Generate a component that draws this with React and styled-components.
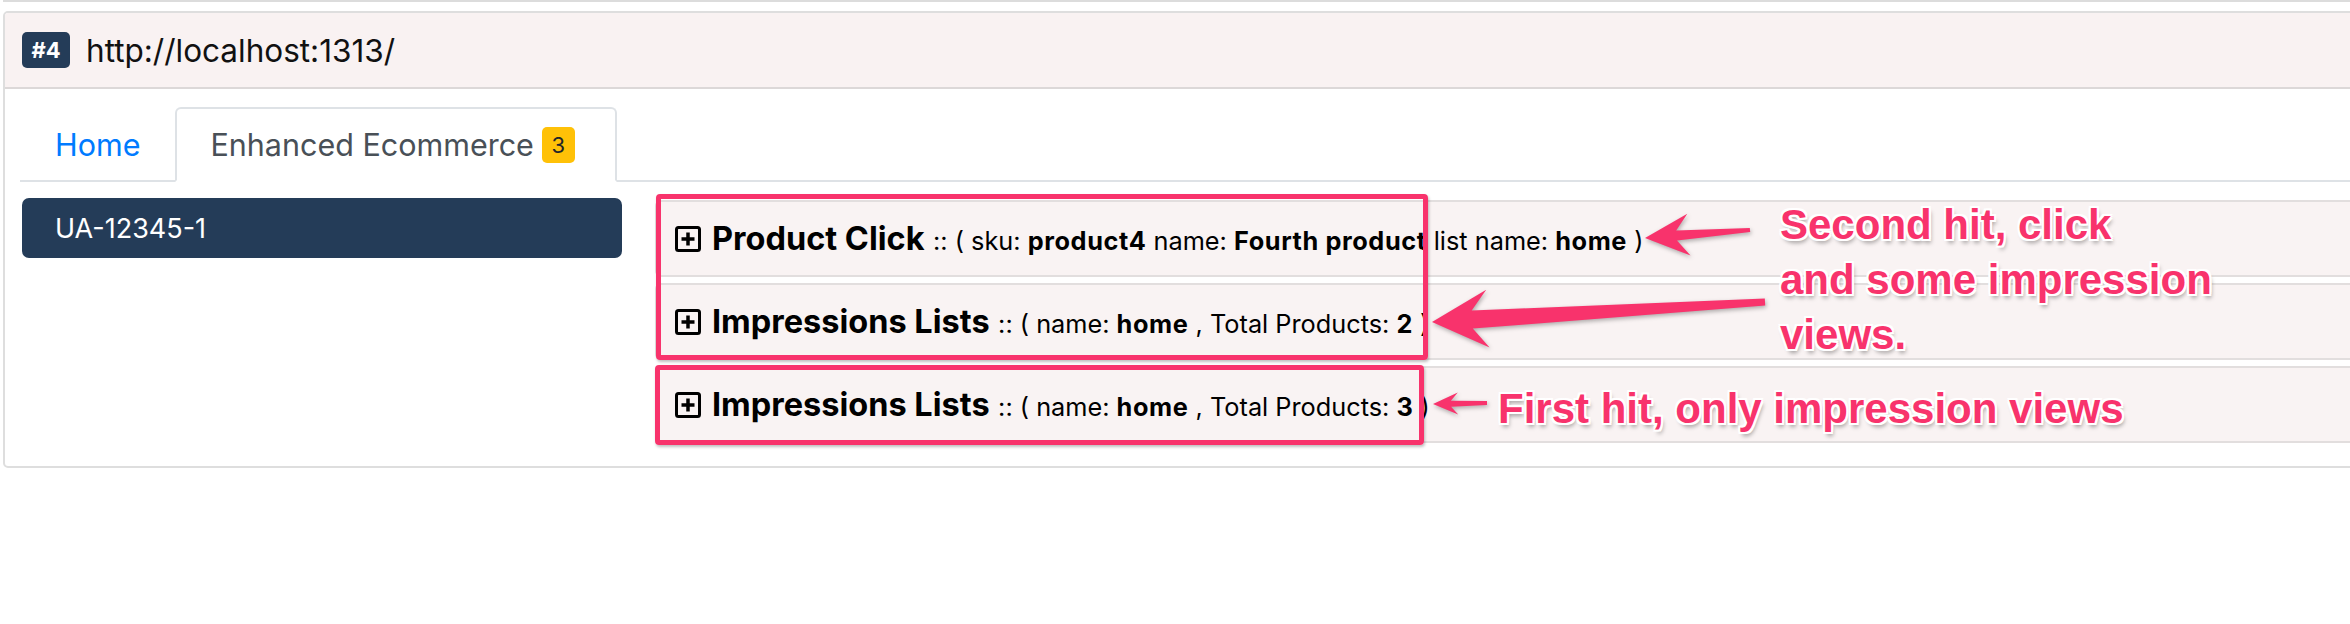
import React from 'react'
import styled, { createGlobalStyle } from 'styled-components'

const GlobalStyle = createGlobalStyle`
	html, body {
		margin: 0;
		padding: 0;
		background: #fff;
		overflow: hidden;
	}
	body {
		font-family: Inter, 'Noto Sans', sans-serif;
		color: #212529;
	}
`

const PINK = '#f8336c'
const NAVY = '#243c58'

const Page = styled.div`
	position: relative;
	width: 2350px;
	height: 624px;
	overflow: hidden;
`

const PrevEdge = styled.div`
	height: 0;
	margin: 0 0 9px 3px;
	border-bottom: 2px solid #dcdcdc;
`

const Card = styled.div`
	width: 2420px;
	margin-left: 3px;
	border: 2px solid #dedede;
	border-radius: 5px;
	overflow: hidden;
`

const Header = styled.div`
	display: flex;
	align-items: center;
	gap: 16px;
	height: 74px;
	padding: 0 17px;
	background: #f9f2f2;
	border-bottom: 2px solid #dcd8d8;
`

const HitBadge = styled.span`
	display: inline-flex;
	align-items: center;
	justify-content: center;
	width: 48px;
	height: 36px;
	border-radius: 5px;
	background: ${NAVY};
	color: #fff;
	font-size: 22px;
	font-weight: 700;
`

const Url = styled.span`
	font-size: 31.5px;
	color: #111;
`

const Body = styled.div`
	padding: 18px 0 23px 15px;
`

const Tabs = styled.ul`
	display: flex;
	margin: 0;
	padding: 0;
	list-style: none;
	border-bottom: 2px solid #dee2e6;
`

const Tab = styled.li`
	display: flex;
	align-items: center;
	gap: 8px;
	margin-bottom: -2px;
	padding: 13px ${p => (p.$active ? 40 : 33)}px 13px 33px;
	font-size: 30.5px;
	line-height: 45px;
	border: 2px solid transparent;
	border-radius: 6px 6px 0 0;
	color: ${p => (p.$active ? '#495057' : '#007bff')};
	${p => p.$active && 'background: #fff; border-color: #dee2e6 #dee2e6 #fff;'}
`

const CountBadge = styled.span`
	display: inline-flex;
	align-items: center;
	justify-content: center;
	width: 33px;
	height: 36px;
	border-radius: 5px;
	background: #ffc107;
	color: #212529;
	font-size: 22px;
	line-height: 1;
`

const Content = styled.div`
	display: flex;
	gap: 33px;
	margin: 16px 0 0 2px;
`

const LeftCol = styled.div`
	flex: none;
	width: 600px;
`

const Property = styled.div`
	display: flex;
	align-items: center;
	height: 60px;
	padding-left: 33px;
	border-radius: 7px;
	background: ${NAVY};
	color: #fff;
	font-size: 27px;
`

const RightCol = styled.div`
	flex: 1;
	display: flex;
	flex-direction: column;
	gap: 6px;
	padding-top: 2px;
`

const Hit = styled.div`
	display: flex;
	align-items: center;
	gap: 11px;
	box-sizing: border-box;
	height: 77px;
	padding-left: 18px;
	background: #f9f3f3;
	border: 2px solid #e2dede;
	border-right: none;
	border-radius: 6px 0 0 6px;
	white-space: nowrap;
	color: #000;
`

const HitTitle = styled.span`
	font-size: 32.5px;
	font-weight: 700;
	margin-right: 4px;
`

const Detail = styled.span`
	font-size: 25.3px;
	b {
		font-weight: 700;
		letter-spacing: 0.6px;
	}
`

const Marker = styled.div`
	position: absolute;
	left: ${p => p.$x}px;
	top: ${p => p.$y}px;
	width: ${p => p.$w}px;
	height: ${p => p.$h}px;
	box-sizing: border-box;
	border: 5px solid ${PINK};
	border-radius: 4px;
	box-shadow: 1px 2px 3px rgba(0, 0, 0, 0.25);
	pointer-events: none;
`

const Note = styled.div`
	position: absolute;
	left: ${p => p.$x}px;
	top: ${p => p.$y}px;
	font-family: 'Liberation Sans', Arial, sans-serif;
	font-size: 42px;
	font-weight: 700;
	line-height: 55px;
	color: ${PINK};
	white-space: pre;
	text-shadow: 2px 0 #fff, -2px 0 #fff, 0 2px #fff, 0 -2px #fff, 2px 2px #fff, -2px -2px #fff,
		2px -2px #fff, -2px 2px #fff, 2px 4px 4px rgba(0, 0, 0, 0.35);
`

const ArrowLayer = styled.svg`
	position: absolute;
	left: 0;
	top: 0;
	pointer-events: none;
	filter: drop-shadow(1px 2px 2px rgba(0, 0, 0, 0.3));
`

const PlusBox = () => (
	<svg width="26" height="26" viewBox="0 0 26 26">
		<rect x="1.5" y="1.5" width="23" height="23" rx="2" fill="none" stroke="#000" strokeWidth="3" />
		<path d="M13 6.5v13M6.5 13h13" stroke="#000" strokeWidth="3.5" />
	</svg>
)

function arrowPath([tx, ty], [px, py], headLen, headW, shaftW, tailW) {
	const dx = px - tx
	const dy = py - ty
	const len = Math.hypot(dx, dy)
	const ux = dx / len
	const uy = dy / len
	const nx = -uy
	const ny = ux
	const bx = px - ux * headLen * 0.72
	const by = py - uy * headLen * 0.72
	const hx = px - ux * headLen
	const hy = py - uy * headLen
	const pts = [
		[tx + (nx * tailW) / 2, ty + (ny * tailW) / 2],
		[bx + (nx * shaftW) / 2, by + (ny * shaftW) / 2],
		[hx + (nx * headW) / 2, hy + (ny * headW) / 2],
		[px, py],
		[hx - (nx * headW) / 2, hy - (ny * headW) / 2],
		[bx - (nx * shaftW) / 2, by - (ny * shaftW) / 2],
		[tx - (nx * tailW) / 2, ty - (ny * tailW) / 2],
	]
	return 'M' + pts.map(p => p.map(v => v.toFixed(1)).join(' ')).join(' L') + ' Z'
}

const hits = [
	{
		title: 'Product Click',
		detail: (
			<>
				:: ( sku: <b>product4</b> name: <b>Fourth product</b> list name: <b>home</b> )
			</>
		),
	},
	{
		title: 'Impressions Lists',
		detail: (
			<>
				:: ( name: <b>home</b> , Total Products: <b>2</b> )
			</>
		),
	},
	{
		title: 'Impressions Lists',
		detail: (
			<>
				:: ( name: <b>home</b> , Total Products: <b>3</b> )
			</>
		),
	},
]

export default function App() {
	return (
		<Page>
			<GlobalStyle />
			<PrevEdge />
			<Card>
				<Header>
					<HitBadge>#4</HitBadge>
					<Url>http://localhost:1313/</Url>
				</Header>
				<Body>
					<Tabs>
						<Tab>Home</Tab>
						<Tab $active>
							Enhanced Ecommerce <CountBadge>3</CountBadge>
						</Tab>
					</Tabs>
					<Content>
						<LeftCol>
							<Property>UA-12345-1</Property>
						</LeftCol>
						<RightCol>
							{hits.map((hit, i) => (
								<Hit key={i}>
									<PlusBox />
									<span>
										<HitTitle>{hit.title}</HitTitle> <Detail>{hit.detail}</Detail>
									</span>
								</Hit>
							))}
						</RightCol>
					</Content>
				</Body>
			</Card>

			<Marker $x={656} $y={194} $w={772} $h={166} />
			<Marker $x={655} $y={365} $w={769} $h={80} />

			<ArrowLayer width="2350" height="624" viewBox="0 0 2350 624">
				<path d={arrowPath([1750, 230], [1645, 238], 44, 42, 10, 4)} fill={PINK} />
				<path d={arrowPath([1765, 302], [1432, 322], 56, 58, 18, 7)} fill={PINK} />
				<path d={arrowPath([1487, 403], [1433, 404], 25, 22, 6, 4)} fill={PINK} />
			</ArrowLayer>

			<Note $x={1780} $y={197}>{'Second hit, click\nand some impression\nviews.'}</Note>
			<Note $x={1498} $y={381}>First hit, only impression views</Note>
		</Page>
	)
}
